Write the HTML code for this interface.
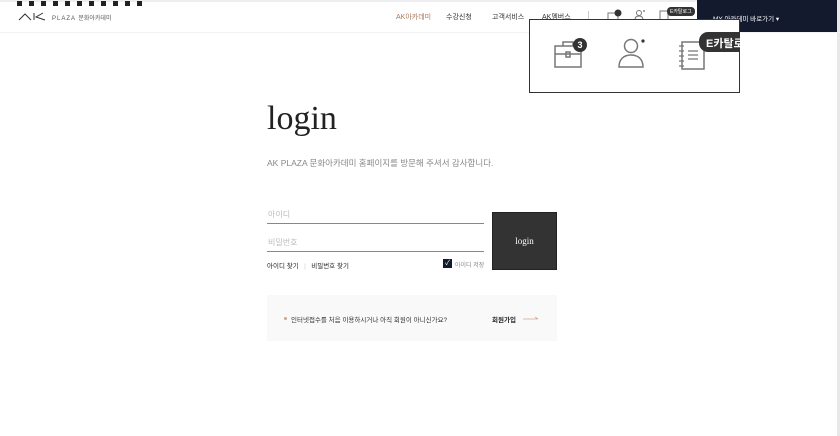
<!DOCTYPE html>
<html><head><meta charset="utf-8"><style>
*{margin:0;padding:0;box-sizing:border-box}
body{width:840px;height:436px;background:#fff;font-family:"Liberation Sans","Noto Sans CJK KR",sans-serif;position:relative;overflow:hidden}
.a{position:absolute}
.nav{font-size:7px;color:#333;top:12px}
</style></head><body>
<div class="a" style="left:0;top:0;width:840px;height:2px;background:#eee"></div>
<div class="a" style="right:0;top:0;width:3px;height:436px;background:#e8e8e8"></div>
<div class="a" style="left:0;top:32px;width:840px;height:1px;background:#f2f2f2"></div>
<div class="a" style="left:17px;top:1px;display:flex;gap:7px"><i style="width:5px;height:5px;background:#222"></i><i style="width:5px;height:5px;background:#222"></i><i style="width:5px;height:5px;background:#222"></i><i style="width:5px;height:5px;background:#222"></i><i style="width:5px;height:5px;background:#222"></i><i style="width:5px;height:5px;background:#222"></i><i style="width:5px;height:5px;background:#222"></i><i style="width:5px;height:5px;background:#222"></i><i style="width:5px;height:5px;background:#222"></i><i style="width:5px;height:5px;background:#222"></i><i style="width:5px;height:5px;background:#222"></i></div>
<svg class="a" style="left:18px;top:12px" width="30" height="9"><path d="M1 8L7 2L13 8M16 1V8M25 1L18 5L27 8" stroke="#333" fill="none" stroke-width="1"/></svg>
<div class="a" style="left:52px;top:13px;font-size:6px;color:#555;letter-spacing:1px">PLAZA <span style="letter-spacing:0">문화아카데미</span></div>
<div class="a nav" style="left:396px;color:#a8775a">AK아카데미</div>
<div class="a nav" style="left:446px">수강신청</div>
<div class="a nav" style="left:492px">고객서비스</div>
<div class="a nav" style="left:542px">AK멤버스</div>
<div class="a" style="left:588px;top:11px;width:1px;height:8px;background:#ccc"></div>
<svg class="a" style="left:607px;top:9px" width="16" height="12"><rect x="1" y="4" width="10" height="7" fill="none" stroke="#777"/><circle cx="11" cy="4" r="3.5" fill="#333"/></svg>
<svg class="a" style="left:634px;top:9px" width="12" height="12"><circle cx="5" cy="4" r="2.5" fill="none" stroke="#777"/><path d="M1 11c0-3 2-4 4-4s4 1 4 4z" fill="none" stroke="#777"/><circle cx="10" cy="2" r="0.8" fill="#333"/></svg>
<svg class="a" style="left:659px;top:10px" width="10" height="12"><rect x="1" y="1" width="8" height="10" fill="none" stroke="#777"/></svg>
<div class="a" style="left:697px;top:0;width:140px;height:32px;background:#141a2e"></div>
<div class="a" style="left:713px;top:13px;font-size:6.5px;color:#fff">MY 아카데미 바로가기 ▾</div>
<div class="a" style="left:667px;top:7px;font-size:5px;color:#fff;background:#333;border-radius:4px;padding:1px 3px">E카탈로그</div>
<div class="a" style="left:529px;top:19px;width:211px;height:74px;background:#fff;border:1px solid #333"></div>
<svg class="a" style="left:553px;top:37px" width="34" height="32"><rect x="2" y="9" width="26" height="21" fill="none" stroke="#777" stroke-width="1.5"/><path d="M10 9V5H20V9M2 17H28M13 15h4v5h-4z" stroke="#777" fill="none" stroke-width="1.5"/><circle cx="27" cy="8" r="7" fill="#333"/><text x="24.5" y="11" font-size="9" font-weight="bold" fill="#fff" font-family="Liberation Sans">3</text></svg>
<svg class="a" style="left:617px;top:37px" width="30" height="32"><circle cx="14" cy="9" r="6.5" fill="none" stroke="#777" stroke-width="1.5"/><path d="M2 30c0-8 5-12 12-12s12 4 12 12z" fill="none" stroke="#777" stroke-width="1.5"/><circle cx="26" cy="4" r="1.6" fill="#333"/></svg>
<svg class="a" style="left:677px;top:39px" width="30" height="32"><rect x="5" y="3" width="22" height="27" fill="none" stroke="#777" stroke-width="1.5"/><path d="M2 7h5M2 12h5M2 17h5M2 22h5M2 27h5M11 12h10M11 16h10M11 20h10" stroke="#777" stroke-width="1.3"/></svg>
<div class="a" style="left:699px;top:32px;width:41px;height:20px;background:#333;border-radius:9px 0 0 9px;color:#fff;font-size:11px;font-weight:bold;padding:3px 0 0 7px;overflow:hidden;white-space:nowrap">E카탈로</div>
<div class="a" style="left:267px;top:100px;font-family:'Liberation Serif',serif;font-size:34px;color:#222">login</div>
<div class="a" style="left:267px;top:157px;font-size:8.5px;color:#888">AK PLAZA 문화아카데미 홈페이지를 방문해 주셔서 감사합니다.</div>
<div class="a" style="left:268px;top:209px;font-size:8px;color:#bbb">아이디</div>
<div class="a" style="left:267px;top:223px;width:217px;height:1px;background:#888"></div>
<div class="a" style="left:268px;top:237px;font-size:8px;color:#bbb">비밀번호</div>
<div class="a" style="left:267px;top:251px;width:217px;height:1px;background:#888"></div>
<div class="a" style="left:267px;top:260px;font-size:6.5px;color:#222">아이디 찾기 &nbsp;&nbsp;<span style="color:#ccc">|</span>&nbsp;&nbsp; 비밀번호 찾기</div>
<div class="a" style="left:443px;top:259px;width:9px;height:9px;background:#141a2e;color:#fff;font-size:7px;line-height:9px;text-align:center">✓</div>
<div class="a" style="left:455px;top:260px;font-size:6px;color:#888">아이디 저장</div>
<div class="a" style="left:492px;top:212px;width:65px;height:58px;background:#333;border:1px solid #222;color:#fff;font-family:'Liberation Serif',serif;font-size:9px;text-align:center;line-height:56px">login</div>
<div class="a" style="left:267px;top:295px;width:290px;height:46px;background:#f9f9f9"></div>
<div class="a" style="left:284px;top:317px;width:3px;height:3px;border-radius:50%;background:#c9a58e"></div>
<div class="a" style="left:291px;top:314px;font-size:6.5px;color:#333">인터넷접수를 처음 이용하시거나 아직 회원이 아니신가요?</div>
<div class="a" style="left:492px;top:314px;font-size:6.5px;color:#222;font-weight:bold">회원가입</div>
<svg class="a" style="left:523px;top:316px" width="16" height="6"><path d="M0 3H15M12 1L15 3" stroke="#d4a88c" fill="none" stroke-width="0.8"/></svg>
</body></html>
